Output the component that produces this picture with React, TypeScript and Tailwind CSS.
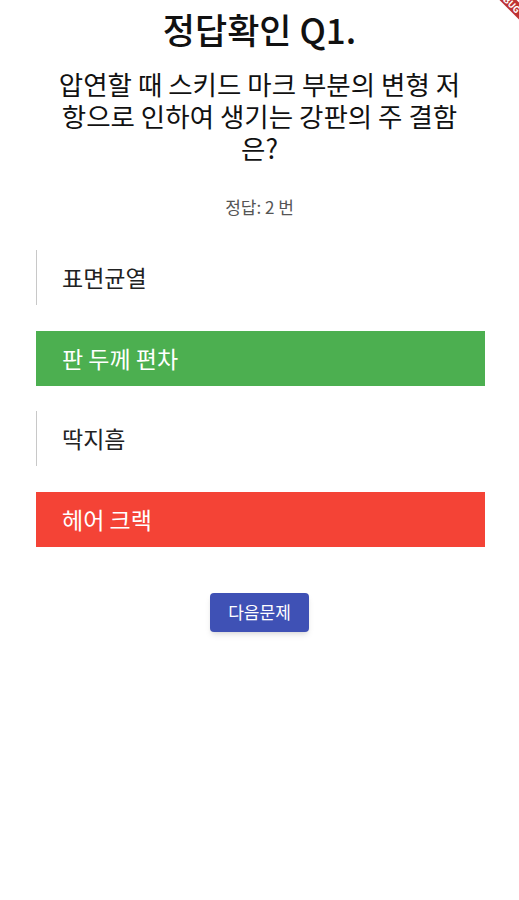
const font = { fontFamily: '"Noto Sans CJK KR", "Noto Sans", Roboto, sans-serif' };

interface Choice {
  label: string;
  state: 'none' | 'correct' | 'wrong';
}

const choices: Choice[] = [
  { label: '표면균열', state: 'none' },
  { label: '판 두께 편차', state: 'correct' },
  { label: '딱지흠', state: 'none' },
  { label: '헤어 크랙', state: 'wrong' },
];

function ChoiceRow({ choice }: { choice: Choice }) {
  if (choice.state === 'correct') {
    return (
      <div className="h-[55px] bg-[#4caf50] flex items-center pl-[26px] text-white text-[23px]">
        {choice.label}
      </div>
    );
  }
  if (choice.state === 'wrong') {
    return (
      <div className="h-[55px] bg-[#f44336] flex items-center pl-[26px] text-white text-[23px]">
        {choice.label}
      </div>
    );
  }
  return (
    <div className="h-[55px] border-l border-[#c8c8c8] flex items-center pl-[25px] text-[#222] text-[23px]">
      {choice.label}
    </div>
  );
}

export default function App() {
  return (
    <div className="relative w-[519px] h-[900px] bg-white overflow-hidden" style={font}>
      {/* debug ribbon */}
      <div className="absolute top-0 right-0 w-[40px] h-[40px] overflow-hidden">
        <div className="absolute top-[-6px] right-[-34px] w-[90px] h-[12px] bg-[#b71c1c]/90 rotate-45 flex items-center justify-center text-white text-[9px] font-bold leading-none">
          DEBUG
        </div>
      </div>

      <div className="flex flex-col items-center pt-[6px]">
        <h1 className="text-[35px] leading-[46px] font-medium text-[#111]">정답확인 Q1.</h1>
        <p className="mt-[16px] w-[414px] text-center text-[26.5px] leading-[32px] text-[#111] break-all">
          압연할 때 스키드 마크 부분의 변형 저항으로 인하여 생기는 강판의 주 결함은?
        </p>
        <p className="mt-[32px] text-[17px] leading-[22px] text-[#555]">정답: 2 번</p>
      </div>

      <div className="mt-[32px] ml-[36px] mr-[34px] flex flex-col gap-[25.5px]">
        {choices.map((c) => (
          <ChoiceRow key={c.label} choice={c} />
        ))}
      </div>

      <div className="mt-[46px] flex justify-center">
        <button className="w-[99px] h-[39px] rounded-[4px] bg-[#3f51b5] text-white text-[17px] shadow-md">
          다음문제
        </button>
      </div>
    </div>
  );
}
